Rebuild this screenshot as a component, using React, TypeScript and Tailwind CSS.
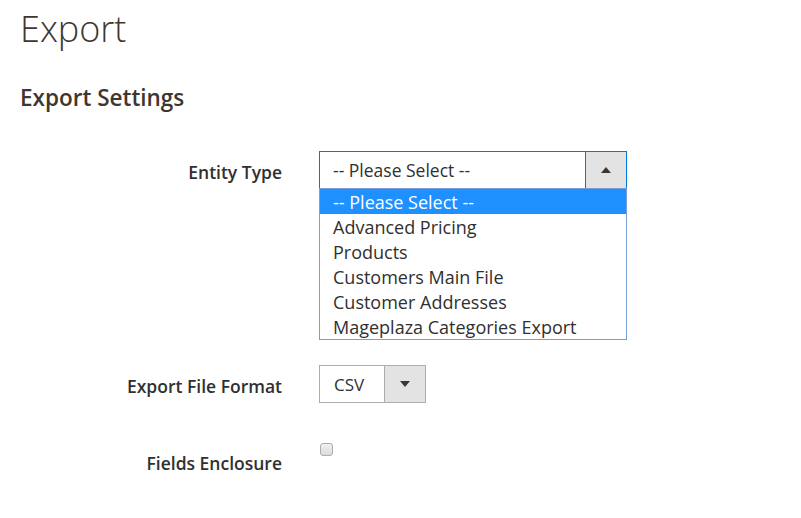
import React from "react";

const options = [
  "-- Please Select --",
  "Advanced Pricing",
  "Products",
  "Customers Main File",
  "Customer Addresses",
  "Mageplaza Categories Export",
];

function Arrow({ up }: { up?: boolean }) {
  return (
    <svg width="10" height="6" viewBox="0 0 10 6" className="block">
      {up ? <path d="M0 6 L5 0 L10 6 Z" fill="#41362f" /> : <path d="M0 0 L10 0 L5 6 Z" fill="#41362f" />}
    </svg>
  );
}

export default function App() {
  return (
    <div className="min-h-[518px] bg-white px-5 text-[#303030]" style={{ fontFamily: '"Open Sans", sans-serif' }}>
      {/* Page title */}
      <h1 className="pt-[3px] text-[36px] font-light leading-[52px] text-[#41362f]">Export</h1>

      {/* Fieldset legend */}
      <h2 className="mt-[28px] text-[22.5px] font-semibold leading-[30px] text-[#41362f]">Export Settings</h2>

      <div className="mt-[38px] flex flex-col">
        {/* Entity Type */}
        <div className="flex items-start">
          <label className="w-[262px] text-right text-[17.5px] font-semibold leading-[42px]">Entity Type</label>
          <div className="relative ml-[37px]">
            <div className="flex h-[38px] w-[308px] border border-[#007bdb] bg-white">
              <div className="flex flex-1 items-center pl-[13px] pt-[2px] text-[17.5px] leading-none">-- Please Select --</div>
              <div className="flex w-[41px] items-center justify-center border-l border-[#007bdb] bg-[#e3e3e3]">
                <Arrow up />
              </div>
            </div>
            {/* Open dropdown list */}
            <ul className="absolute left-0 top-[37px] z-10 w-[308px] border border-[#7a9cd9] bg-white text-[18px]">
              {options.map((o, i) => (
                <li
                  key={o}
                  className={
                    i === 0
                      ? "h-[25px] bg-[#1e90ff] pl-[13px] leading-[26px] text-white"
                      : "h-[25px] pl-[13px] leading-[26px] text-[#303030]"
                  }
                >
                  {o}
                </li>
              ))}
            </ul>
          </div>
        </div>

        {/* Export File Format */}
        <div className="mt-[172px] flex items-start">
          <label className="w-[262px] text-right text-[17.5px] font-semibold leading-[42px]">Export File Format</label>
          <div className="ml-[37px] flex h-[38px] w-[107px] border border-[#adadad] bg-white">
            <div className="flex flex-1 items-center pl-[14px] text-[17px] leading-none">CSV</div>
            <div className="flex w-[41px] items-center justify-center border-l border-[#adadad] bg-[#e3e3e3]">
              <Arrow />
            </div>
          </div>
        </div>

        {/* Fields Enclosure */}
        <div className="mt-[36px] flex items-start">
          <label className="w-[262px] text-right text-[17.5px] font-semibold leading-[40px]">Fields Enclosure</label>
          <div className="ml-[38px] h-[13px] w-[13px] rounded-[3px] border border-[#adadad] bg-gradient-to-b from-[#f0f0f0] to-[#dcdcdc]" />
        </div>
      </div>
    </div>
  );
}
